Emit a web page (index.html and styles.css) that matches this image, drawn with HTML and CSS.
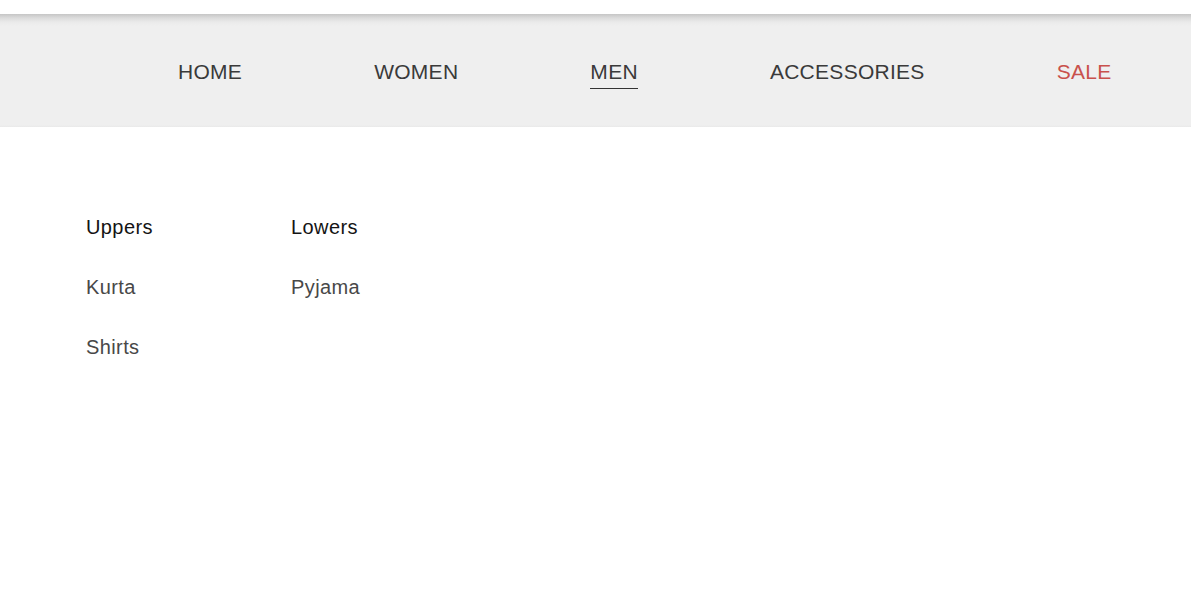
FILE: index.html
```html
<!DOCTYPE html>
<html>
<head>
<meta charset="utf-8">
<link rel="stylesheet" href="styles.css">
</head>
<body>
<nav class="nav">
  <a class="nav-item">HOME</a>
  <a class="nav-item">WOMEN</a>
  <a class="nav-item active">MEN</a>
  <a class="nav-item">ACCESSORIES</a>
  <a class="nav-item sale">SALE</a>
</nav>
<section class="menu">
  <div class="col">
    <div class="head">Uppers</div>
    <div class="item">Kurta</div>
    <div class="item">Shirts</div>
  </div>
  <div class="col">
    <div class="head">Lowers</div>
    <div class="item">Pyjama</div>
  </div>
</section>
</body>
</html>
```
FILE: styles.css
```css
html, body {
  margin: 0;
  padding: 0;
  background: #fff;
  font-family: "Liberation Sans", Arial, sans-serif;
}
body {
  padding-top: 14px;
}
.nav {
  height: 113px;
  background: linear-gradient(to bottom, #c6c6c6 0px, #dcdcdc 4px, #eaeaea 8px, #efefef 12px, #efefef 111px, #e9e9e9 113px);
  display: flex;
  align-items: flex-start;
  padding-left: 178px;
  gap: 132px;
  box-sizing: border-box;
  padding-top: 45px;
}
.nav-item {
  font-size: 21px;
  line-height: 26px;
  letter-spacing: 0.28px;
  color: #3a3a3a;
  padding-bottom: 3px;
  border-bottom: 1px solid transparent;
}
.nav-item.active {
  border-bottom-color: #333;
}
.nav-item.sale {
  color: #c9514c;
}
.menu {
  display: flex;
  padding-left: 86px;
  padding-top: 88px;
}
.col {
  width: 205px;
  display: flex;
  flex-direction: column;
  gap: 36px;
}
.head, .item {
  font-size: 20px;
  line-height: 24px;
  letter-spacing: 0.4px;
}
.head { color: #141414; }
.item { color: #484848; }
```
